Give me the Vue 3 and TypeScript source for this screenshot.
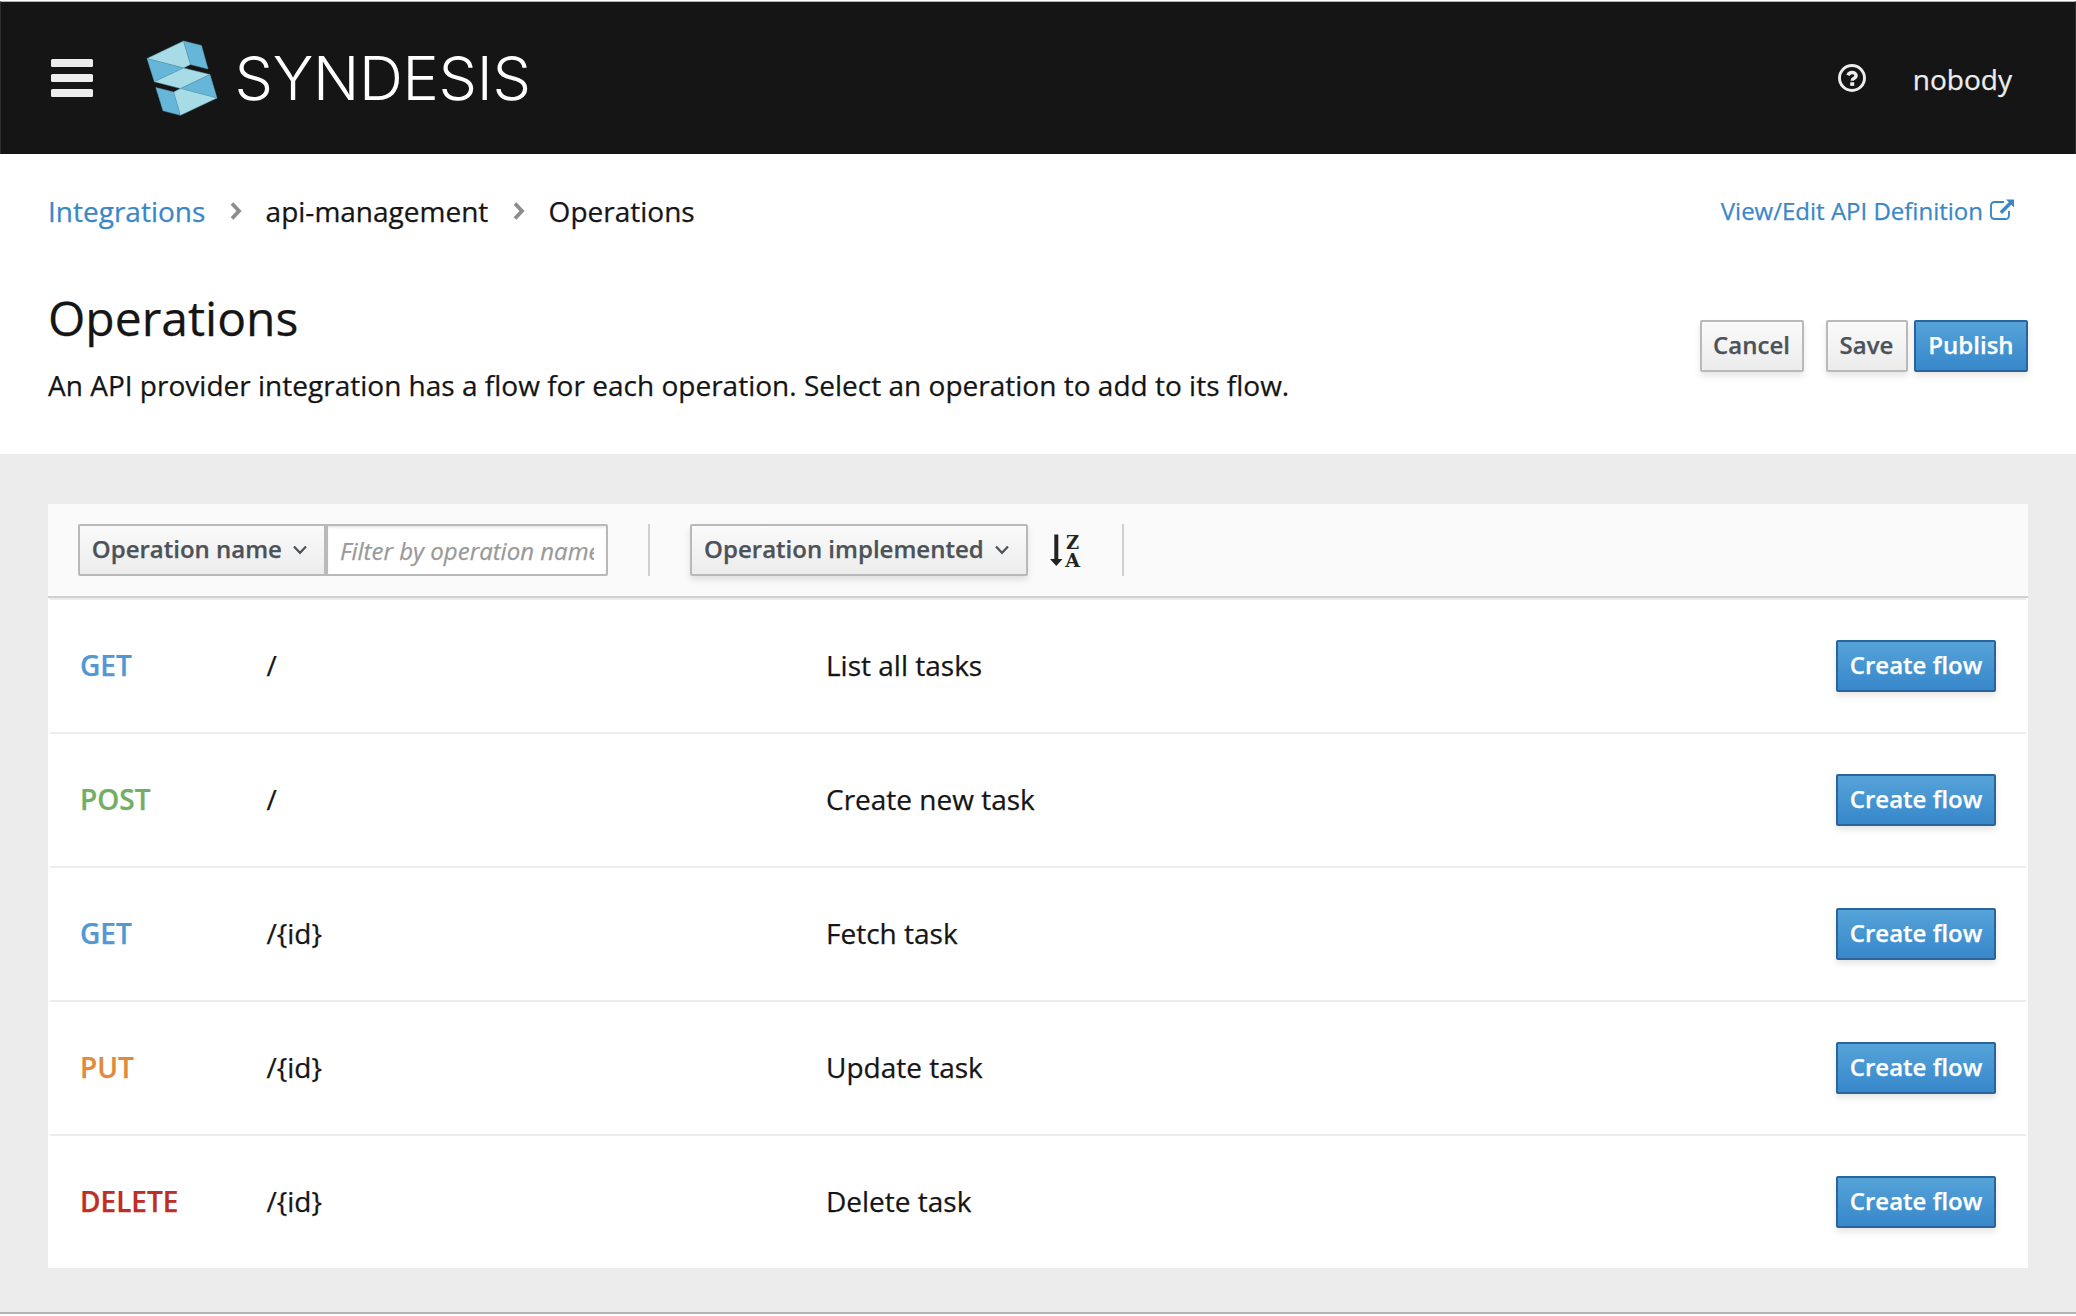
<script setup lang="ts">
interface Operation {
  method: string
  path: string
  description: string
}

const operations: Operation[] = [
  { method: 'GET', path: '/', description: 'List all tasks' },
  { method: 'POST', path: '/', description: 'Create new task' },
  { method: 'GET', path: '/{id}', description: 'Fetch task' },
  { method: 'PUT', path: '/{id}', description: 'Update task' },
  { method: 'DELETE', path: '/{id}', description: 'Delete task' },
]
</script>

<template>
  <div class="page">
    <header class="masthead">
      <div class="menu"><i></i><i></i><i></i></div>
      <svg class="brand" width="400" height="90" viewBox="140 34 400 90">
        <g stroke="#5d9fb5" stroke-width="0.5" stroke-linejoin="round">
          <path fill="#a7dbe5" d="M147 58.5 183.500 41 190.500 64.500 183.500 68Z" />
          <path fill="#65b6d8" d="M183.500 41 201.500 45.500 208 69 190.500 64.500Z" />
          <path fill="#65b6d8" d="M147 58.500 183.500 68 154.300 81.700Z" />
          <path fill="#a7dbe5" d="M183.500 68 210 74.500 180.500 88.500 154.300 81.700Z" />
          <path fill="#65b6d8" d="M210 74.500 217 98 180.500 88.500Z" />
          <path fill="#65b6d8" d="M155.800 87.500 173.700 92 180.500 115.300 163 110.700Z" />
          <path fill="#a7dbe5" d="M180.500 88.500 217 98 180.500 115.300 173.700 92Z" />
        </g>
        <text class="brand-name" x="234.500" y="100" textLength="296.500" lengthAdjust="spacing">SYNDESIS</text>
      </svg>
      <div class="user">
        <svg width="28" height="28" viewBox="0 0 28 28">
          <circle cx="14" cy="14" r="12.500" fill="none" stroke="#ededed" stroke-width="2.900" />
          <path d="M9.900 11.200c.9-1.800 2.200-2.700 4.100-2.700 2.300 0 4.100 1.300 4.100 3.200 0 2.700-3.900 2.300-3.900 5" fill="none" stroke="#ededed" stroke-width="3.500" />
          <rect x="12.200" y="18.200" width="4" height="3.700" fill="#ededed" />
        </svg>
        <span>nobody</span>
      </div>
    </header>

    <section class="intro">
      <div class="crumb-row">
        <nav class="crumbs">
          <a>Integrations</a>
          <svg width="14" height="18" viewBox="0 0 14 18"><path d="M3 1.500 10 9 3 16.500" /></svg>
          <span>api-management</span>
          <svg width="14" height="18" viewBox="0 0 14 18"><path d="M3 1.500 10 9 3 16.500" /></svg>
          <span>Operations</span>
        </nav>
        <a class="definition">View/Edit API Definition<svg width="24" height="22" viewBox="0 0 24 22">
          <path d="M14 3H4.500A3.500 3.500 0 0 0 1 6.500v10A3.500 3.500 0 0 0 4.500 20h11a3.500 3.500 0 0 0 3.500-3.500V12" fill="none" stroke="#3a87c8" stroke-width="1.900" />
          <path d="M16 .5h8v8l-2.800-2.800-9.200 9.200-2.400-2.400 9.200-9.200Z" fill="#3a87c8" />
        </svg></a>
      </div>
      <div class="title-row">
        <div>
          <h1>Operations</h1>
          <p>An API provider integration has a flow for each operation. Select an operation to add to its flow.</p>
        </div>
        <div class="actions">
          <button class="btn cancel">Cancel</button>
          <button class="btn save">Save</button>
          <button class="btn primary publish">Publish</button>
        </div>
      </div>
    </section>

    <main class="content">
      <div class="toolbar">
        <button class="btn field">Operation name
          <svg width="14" height="10" viewBox="0 0 14 10"><path d="M1 1.500 7 7.800 13 1.500" /></svg>
        </button>
        <input class="filter" type="text" placeholder="Filter by operation name..." />
        <i class="divider"></i>
        <button class="btn sort-by">Operation implemented
          <svg width="14" height="10" viewBox="0 0 14 10"><path d="M1 1.500 7 7.800 13 1.500" /></svg>
        </button>
        <svg class="sort" width="32" height="40" viewBox="0 0 32 40">
          <path d="M4.300 2.500h4V27h4.200L6.300 34 0 27h4.300Z" fill="#232323" />
          <text x="16" y="16.500">Z</text>
          <text x="15.300" y="34.500">A</text>
        </svg>
        <i class="divider end"></i>
      </div>
      <ul class="list">
        <li v-for="(op, i) in operations" :key="i" class="row">
          <span class="method" :class="op.method.toLowerCase()">{{ op.method }}</span>
          <span class="path">{{ op.path }}</span>
          <span class="description">{{ op.description }}</span>
          <button class="btn primary create">Create flow</button>
        </li>
      </ul>
    </main>
  </div>
</template>

<style>
body {
  background: #fff;
}
</style>

<style scoped>
* {
  box-sizing: border-box;
}
.page {
  width: 2076px;
  height: 1314px;
  display: flex;
  flex-direction: column;
  background: #ececec;
  border-top: 1px solid #fff;
  border-bottom: 2px solid #b3b3b3;
  font: 28px/40px 'Open Sans', 'Noto Sans', sans-serif;
  color: #151515;
  -webkit-text-stroke-width: 0.25px;
}
.masthead {
  height: 153px;
  display: flex;
  align-items: flex-start;
  background: #151515;
  border-top: 1px solid #aeb5b5;
  border-left: 1px solid #2e2e2e;
  border-right: 1px solid #2e2e2e;
}
.menu {
  width: 42px;
  margin: 57px 47px 0 50px;
  display: flex;
  flex-direction: column;
  gap: 7px;
}
.menu i {
  height: 8px;
  border-radius: 1.500px;
  background: #ededed;
}
.brand {
  margin-top: 32px;
}
.brand-name {
  font: 300 61px Inter, 'Open Sans', sans-serif;
  fill: #fff;
  -webkit-text-stroke-width: 0;
}
.user {
  margin: 57px 63px 0 auto;
  display: flex;
  gap: 47px;
  color: #ededed;
}
.user svg {
  margin-top: 5px;
}
.intro {
  height: 300px;
  padding: 37px 48px 0;
  background: #fff;
}
.crumb-row {
  display: flex;
  justify-content: space-between;
}
.crumbs {
  display: flex;
  align-items: center;
}
.crumbs svg {
  margin: 0 22.500px 0 23.800px;
}
.crumbs path {
  fill: none;
  stroke: #8b8d8f;
  stroke-width: 3.800;
}
.crumbs a,
.definition {
  color: #3a87c8;
}
.definition {
  display: flex;
  margin-right: 14px;
  font-size: 24px;
}
.definition svg {
  margin: 8px 0 0 7px;
}
.title-row {
  display: flex;
  justify-content: space-between;
}
h1 {
  margin: 56px 0 0;
  font-size: 48px;
  font-weight: 400;
  line-height: 62px;
}
p {
  margin: 16px 0 0;
  letter-spacing: 0.010px;
}
.actions {
  display: flex;
  margin-top: 89px;
}
.btn {
  height: 52px;
  padding: 0 0 2px;
  border: 2px solid #b9b9b9;
  border-radius: 2px;
  background: linear-gradient(#fafafa, #ececec);
  box-shadow: 0 4px 6px rgba(3, 3, 3, 0.1);
  color: #4d5258;
  font: 600 24px/40px 'Open Sans', 'Noto Sans', sans-serif;
  -webkit-text-stroke-width: 0.25px;
  white-space: nowrap;
}
.btn svg path {
  fill: none;
  stroke: #4d5258;
  stroke-width: 2.200;
}
.btn svg {
  margin: 0 0 4px 5px;
  vertical-align: middle;
}
.primary {
  border-color: #29649b;
  background: linear-gradient(#56a3d9, #3787ca);
  color: #fff;
}
.cancel {
  width: 104px;
  margin-right: 22px;
  padding-right: 1px;
}
.save {
  width: 82px;
  margin-right: 6px;
  padding-right: 1px;
}
.publish {
  width: 114px;
}
.content {
  width: 1980px;
  margin: 50px 48px 0;
}
.toolbar {
  height: 94px;
  padding: 20px 30px 0;
  display: flex;
  background: #fafafa;
  border-bottom: 2px solid #d0d0d0;
}
.field {
  width: 248px;
  padding-right: 5px;
  border-radius: 2px 0 0 2px;
  box-shadow: none;
}
.filter {
  width: 282px;
  height: 52px;
  padding: 1px 12px 0;
  border: 2px solid #b9b9b9;
  border-radius: 0 2px 2px 0;
  box-shadow: inset 0 2px 2px rgba(3, 3, 3, 0.075);
  font: 24px 'Open Sans', 'Noto Sans', sans-serif;
}
.filter::placeholder {
  color: #999;
  font-style: italic;
}
.divider {
  width: 2px;
  height: 52px;
  margin: 0 40px;
  background: #d0d0d0;
}
.sort-by {
  width: 338px;
  padding-right: 5px;
}
.sort {
  margin: 8px 0 0 22px;
}
.sort text {
  font: bold 19px 'DejaVu Serif', serif;
  fill: #232323;
  -webkit-text-stroke-width: 0;
}
.sort text:first-of-type {
  font-size: 18px;
}
.end {
  margin-right: 0;
}
.list {
  height: 670px;
  margin: 0;
  padding: 0 2px;
  background: #fff;
  list-style: none;
}
.row {
  height: 134px;
  display: flex;
  align-items: center;
  padding: 0 30px;
  border-top: 2px solid #ececec;
}
.method,
.path,
.description {
  padding-bottom: 2px;
}
.method {
  width: 186.500px;
  font-weight: 600;
}
.get {
  color: #5397d3;
}
.post {
  color: #72ad66;
}
.put {
  color: #e08b3c;
}
.delete {
  color: #bf2e24;
}
.path {
  width: 559.500px;
}
.create {
  width: 160px;
  margin-left: auto;
}
</style>
